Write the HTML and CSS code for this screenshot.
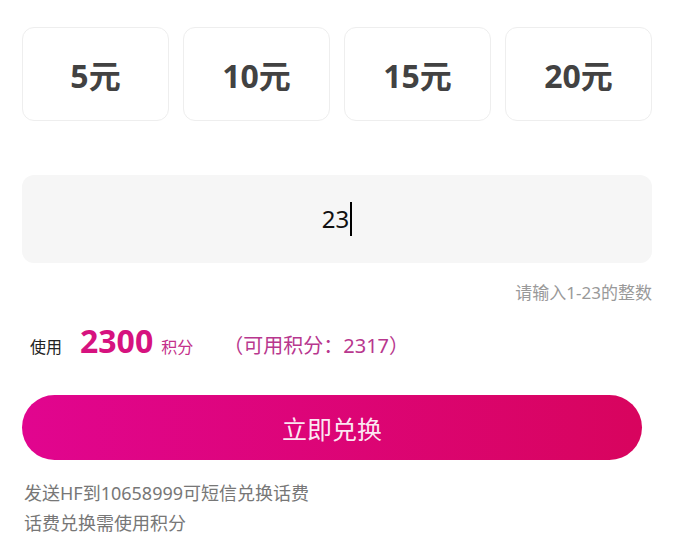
FILE: index.html
```html
<!DOCTYPE html>
<html lang="zh-CN">
<head>
  <meta charset="UTF-8">
  <meta name="viewport" content="width=device-width, initial-scale=1.0">
  <title>话费兑换</title>
  <link rel="stylesheet" href="styles.css">
</head>
<body>
  <div class="page">
    <div class="amount-list">
      <div class="amount-card">5元</div>
      <div class="amount-card">10元</div>
      <div class="amount-card">15元</div>
      <div class="amount-card">20元</div>
    </div>

    <div class="amount-input">
      <span class="value">23</span><span class="caret"></span>
    </div>
    <div class="hint">请输入1-23的整数</div>

    <div class="points-row">
      <span class="label">使用</span>
      <span class="points">2300</span>
      <span class="unit">积分</span>
      <span class="available">（可用积分：2317）</span>
    </div>

    <button class="submit-btn">立即兑换</button>

    <div class="notes">
      <p>发送HF到10658999可短信兑换话费</p>
      <p>话费兑换需使用积分</p>
    </div>
  </div>
</body>
</html>
```

FILE: styles.css
```css
body {
  margin: 0;
  padding: 0;
  background: #fff;
  font-family: "Noto Sans", "Noto Sans CJK SC", sans-serif;
  color: #333;
}

.page {
  width: 630px;
  padding: 27px 34px 0 22px;
}

.amount-list {
  display: grid;
  grid-template-columns: repeat(4, 1fr);
  gap: 14px;
}

.amount-card {
  height: 92px;
  border: 1px solid #eeeeee;
  border-radius: 12px;
  background: #fff;
  display: flex;
  align-items: center;
  justify-content: center;
  font-size: 32px;
  font-weight: bold;
  color: #424242;
}

.amount-input {
  margin-top: 54px;
  height: 88px;
  border-radius: 12px;
  background: #f6f6f6;
  display: flex;
  align-items: center;
  justify-content: center;
}

.amount-input .value {
  font-size: 24px;
  color: #111;
  line-height: 1;
}

.amount-input .caret {
  display: inline-block;
  width: 2px;
  height: 34px;
  background: #000;
  margin-left: 1px;
}

.hint {
  margin-top: 20px;
  text-align: right;
  font-size: 17px;
  line-height: 20px;
  color: #999;
}

.points-row {
  margin-top: 18px;
  height: 40px;
  display: flex;
  align-items: baseline;
  padding-left: 8px;
}

.points-row .label {
  font-size: 16px;
  color: #222;
}

.points-row .points {
  margin-left: 18px;
  font-size: 32px;
  font-weight: bold;
  color: #d6127f;
  line-height: 40px;
}

.points-row .unit {
  margin-left: 8px;
  font-size: 16px;
  color: #c4318b;
}

.points-row .available {
  margin-left: 30px;
  font-size: 20px;
  color: #b8378e;
}

.submit-btn {
  display: block;
  margin-top: 34px;
  width: 620px;
  height: 65px;
  border: none;
  border-radius: 33px;
  background: linear-gradient(90deg, #e1058f, #d8045e);
  color: rgba(255, 255, 255, 0.92);
  font-family: inherit;
  font-size: 25px;
  cursor: pointer;
}

.notes {
  margin-top: 18px;
}

.notes p {
  margin: 0;
  padding-left: 2px;
  font-size: 18px;
  line-height: 30px;
  color: #777;
}
```
